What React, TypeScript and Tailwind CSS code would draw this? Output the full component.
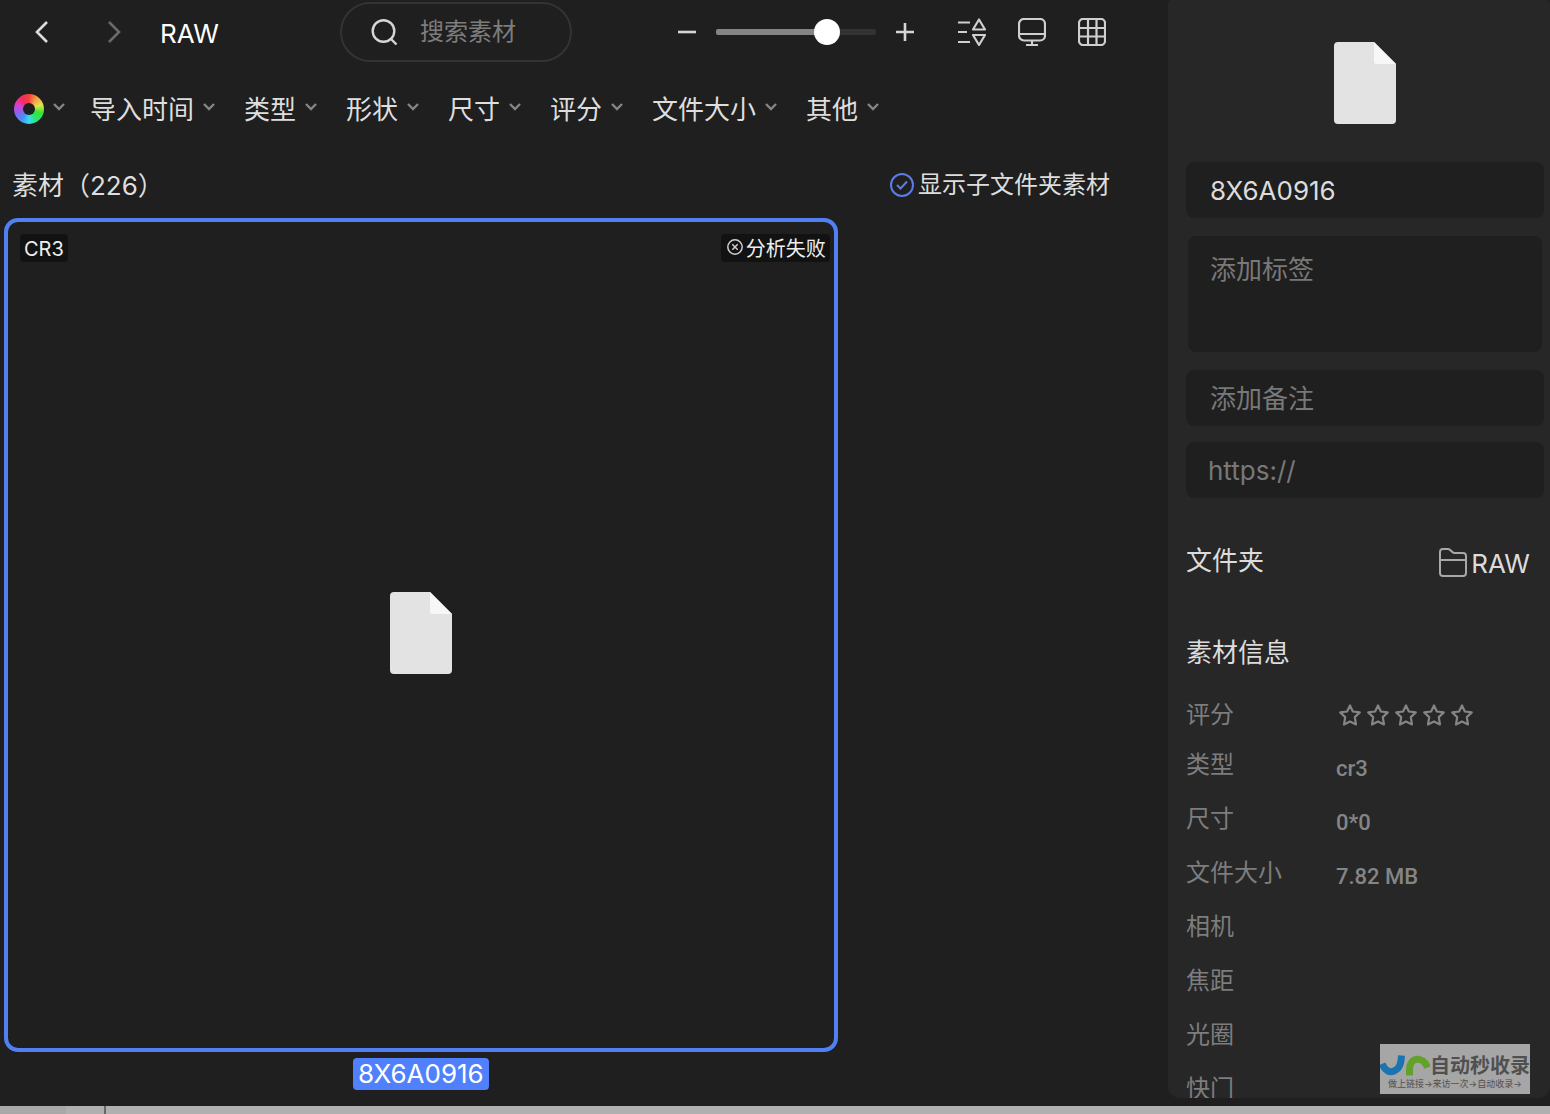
import { useState } from "react";

const filters = ["导入时间", "类型", "形状", "尺寸", "评分", "文件大小", "其他"];

const info = [
  { label: "类型", value: "cr3" },
  { label: "尺寸", value: "0*0" },
  { label: "文件大小", value: "7.82 MB" },
  { label: "相机", value: "" },
  { label: "焦距", value: "" },
  { label: "光圈", value: "" },
  { label: "快门", value: "" },
];

function FileIcon() {
  return (
    <svg width="62" height="82" viewBox="0 0 62 82" aria-hidden="true">
      <path d="M3 0H40L62 22V78a4 4 0 0 1-4 4H4a4 4 0 0 1-4-4V4a4 4 0 0 1 4-4Z" fill="#e3e3e3" />
      <path d="M40 0 62 22H42a2 2 0 0 1-2-2Z" fill="#f7f7f7" />
    </svg>
  );
}

function Caret() {
  return (
    <svg className="mb-1" width="14" height="10" viewBox="0 0 14 10" fill="none" stroke="#858585" strokeWidth="2.4" aria-hidden="true">
      <path d="M2 2l5 5 5-5" />
    </svg>
  );
}

function Toolbar() {
  const [size, setSize] = useState(73);
  // the thumb is 26px wide, so its centre travels from 13px to 147px
  const fill = 13 + (size / 100) * 134;

  return (
    <header className="flex h-16 shrink-0 items-center pr-[62px]">
      <div className="flex w-[340px] shrink-0 items-center pl-6">
        <button aria-label="后退" className="flex h-9 w-9 items-center justify-center">
          <svg width="14" height="24" viewBox="0 0 14 24" fill="none" stroke="#dcdcdc" strokeWidth="2.6">
            <path d="M12 2 2 12l10 10" />
          </svg>
        </button>
        <button aria-label="前进" className="ml-9 flex h-9 w-9 items-center justify-center">
          <svg width="14" height="24" viewBox="0 0 14 24" fill="none" stroke="#6a6a6a" strokeWidth="2.6">
            <path d="m2 2 10 10L2 22" />
          </svg>
        </button>
        <h1 className="ml-7 pt-0.5 text-[26px] text-white">RAW</h1>
      </div>

      <label className="flex h-[60px] w-[232px] items-center gap-[22px] rounded-full border-2 border-[#333] pl-7">
        <svg className="shrink-0" width="28" height="28" viewBox="0 0 28 28" fill="none" stroke="#d6d6d6" strokeWidth="2.4" aria-hidden="true">
          <circle cx="13.5" cy="13" r="10.8" />
          <path d="m21 21 5.500 5.500" />
        </svg>
        <input
          type="text"
          aria-label="搜索素材"
          placeholder="搜索素材"
          className="min-w-0 flex-1 bg-transparent text-2xl text-[#ddd] outline-none placeholder:text-[#7d7d7d]"
        />
      </label>

      <div className="ml-auto flex items-center">
        <button aria-label="缩小" className="flex h-6 w-6 items-center justify-center">
          <svg width="18" height="18" viewBox="0 0 18 18" stroke="#d6d6d6" strokeWidth="2.6">
            <path d="M0 9h18" />
          </svg>
        </button>
        <input
          type="range"
          aria-label="缩略图大小"
          value={size}
          onChange={(e) => setSize(Number(e.target.value))}
          className="mx-[17px] h-1.5 w-40 appearance-none rounded-xs [&::-webkit-slider-thumb]:h-[26px] [&::-webkit-slider-thumb]:w-[26px] [&::-webkit-slider-thumb]:appearance-none [&::-webkit-slider-thumb]:rounded-full [&::-webkit-slider-thumb]:bg-white"
          style={{ background: `linear-gradient(to right, #858585 ${fill}px, #333 ${fill}px)` }}
        />
        <button aria-label="放大" className="flex h-6 w-6 items-center justify-center">
          <svg width="18" height="18" viewBox="0 0 18 18" stroke="#d6d6d6" strokeWidth="2.6">
            <path d="M0 9h18M9 0v18" />
          </svg>
        </button>
        <div className="ml-[41px] flex items-center gap-8 text-[#cfcfcf]">
          <button aria-label="排序">
            <svg width="28" height="28" viewBox="0 0 28 28" fill="none" stroke="currentColor" strokeWidth="2.2" strokeLinejoin="round">
              <path d="M0 4.500h12M0 14h9M0 24h12" />
              <path d="M21 1.500 27 11.500H15ZM21 27 27 17H15Z" />
            </svg>
          </button>
          <button aria-label="全屏预览">
            <svg width="28" height="28" viewBox="0 0 28 28" fill="none" stroke="currentColor" strokeWidth="2.2">
              <rect x="1" y="1" width="26" height="21.500" rx="5" />
              <path d="M1 16h26M14 22v5M8 27h12" />
            </svg>
          </button>
          <button aria-label="网格视图">
            <svg width="28" height="28" viewBox="0 0 28 28" fill="none" stroke="currentColor" strokeWidth="2.2">
              <rect x="1" y="1" width="26" height="26" rx="4" />
              <path d="M10 1v26M18.500 1v26M1 10h26M1 18.500h26" />
            </svg>
          </button>
        </div>
      </div>
    </header>
  );
}

function FilterBar() {
  return (
    <nav className="flex h-[88px] shrink-0 items-center gap-6 pt-0.5 pl-3.5">
      <button aria-label="颜色" className="flex items-center gap-2">
        <span className="flex h-[30px] w-[30px] items-center justify-center rounded-full bg-[conic-gradient(#f5413b,#f6a04a,#e2e54b,#35e531,#2be56c,#35dcf0,#4a8df5,#8a62ee,#d93fd0,#f52b62,#f5413b)]">
          <span className="h-3 w-3 rounded-full bg-[#1f1f1f]" />
        </span>
        <Caret />
      </button>
      <div className="flex items-center gap-7">
        {filters.map((name) => (
          <button key={name} className="flex items-center gap-2 text-[26px] whitespace-nowrap text-[#dedede]">
            {name}
            <Caret />
          </button>
        ))}
      </div>
    </nav>
  );
}

function AssetCard() {
  return (
    <figure className="flex w-[72%] flex-col items-center">
      <div className="relative flex aspect-square w-full items-center justify-center rounded-[14px] border-4 border-[#5080f2] pb-1">
        <span className="absolute top-3 left-3 flex h-7 items-center rounded bg-[#121212] px-1 pt-0.5 text-xl text-[#eee]">CR3</span>
        <span className="absolute top-3 right-1 flex h-7 items-center gap-[3px] rounded bg-[#121212] px-1 pt-0.5 text-xl text-[#eee]">
          <svg className="mb-1 ml-0.5" width="16" height="16" viewBox="0 0 16 16" fill="none" stroke="#d0d0d0" strokeWidth="1.500" aria-hidden="true">
            <circle cx="8" cy="8" r="7.200" />
            <path d="m5.300 5.300 5.400 5.400M10.700 5.300l-5.400 5.400" />
          </svg>
          分析失败
        </span>
        <FileIcon />
      </div>
      <figcaption className="mt-1.5 flex h-8 items-center rounded bg-[#5080fb] px-[5px] text-[26px] text-white">8X6A0916</figcaption>
    </figure>
  );
}

function Rating() {
  return (
    <div className="flex">
      {[1, 2, 3, 4, 5].map((n) => (
        <button key={n} aria-label={`${n} 星`} className="flex w-7 justify-center">
          <svg width="24" height="24" viewBox="0 0 24 24" fill="none" stroke="#858585" strokeWidth="2.2" strokeLinejoin="round">
            <path d="m12 2.500 2.900 6 6.900.900-5 4.700 1.200 7.400-6-3-6 3 1.200-7.400-5-4.700 6.900-.900Z" />
          </svg>
        </button>
      ))}
    </div>
  );
}

function Inspector() {
  return (
    <aside className="mb-2 w-[382px] shrink-0 overflow-hidden rounded-t-sm rounded-b-xl bg-[#272727] pt-[42px] pr-1.5 pl-[18px]">
      <div className="flex h-[82px] justify-center">
        <FileIcon />
      </div>

      <div className="mt-[38px] flex flex-col text-[26px] text-[#dcdcdc]">
        <input aria-label="名称" defaultValue="8X6A0916" className="h-14 rounded-lg bg-[#1f1f1f] px-6 outline-none" />
        <textarea
          aria-label="标签"
          placeholder="添加标签"
          className="mx-0.5 my-[18px] h-[116px] resize-none rounded-lg bg-[#1f1f1f] px-[22px] py-3.5 outline-none placeholder:text-[#787878]"
        />
        <input aria-label="备注" placeholder="添加备注" className="h-14 rounded-lg bg-[#1f1f1f] px-6 outline-none placeholder:text-[#787878]" />
        <input aria-label="链接" placeholder="https://" className="mt-4 h-14 rounded-lg bg-[#1f1f1f] px-[22px] outline-none placeholder:text-[#787878]" />
      </div>

      <div className="mt-[46px] flex h-8 items-center justify-between pr-3.5 text-[26px] text-[#dcdcdc]">
        <h2>文件夹</h2>
        <a href="#raw" className="flex items-center gap-1 pt-1.5">
          <svg width="28" height="30" viewBox="0 0 28 30" fill="none" stroke="#a8a8a8" strokeWidth="2" aria-hidden="true">
            <path d="M1 12V4a3 3 0 0 1 3-3h5c3 0 3.500 4 6.500 4H24a3 3 0 0 1 3 3v17a3 3 0 0 1-3 3H4a3 3 0 0 1-3-3V12h26" />
          </svg>
          RAW
        </a>
      </div>

      <h2 className="mt-[60px] flex h-8 items-center text-[26px] text-[#dcdcdc]">素材信息</h2>

      <dl className="mt-6 text-2xl text-[#7d7d7d]">
        <div className="flex h-[46px] items-center">
          <dt className="w-[150px]">评分</dt>
          <dd>
            <Rating />
          </dd>
        </div>
        {info.map(({ label, value }) => (
          <div key={label} className="flex h-[54px] items-center">
            <dt className="w-[150px]">{label}</dt>
            <dd className="pt-2 font-[Roboto] text-[22px] font-medium text-[#858585]">{value}</dd>
          </div>
        ))}
      </dl>
    </aside>
  );
}

function SiteBadge() {
  return (
    <div className="absolute right-5 bottom-5 flex h-[50px] w-[150px] flex-col overflow-hidden bg-[#a6a6a6] pt-2.5 text-[#505050]">
      <div className="flex h-6 items-center">
        <svg className="shrink-0" width="50" height="24" viewBox="0 0 50 24" fill="none" strokeWidth="7" aria-hidden="true">
          <path d="M2 10c3 7 8 9 12 7 5-2 7-6 7.500-15.500" stroke="#1b74b0" />
          <path d="M29.500 21.500V16c0-14 14-14 18-2.500" stroke="#62a12a" />
        </svg>
        <span className="text-xl leading-6 font-bold whitespace-nowrap">自动秒收录</span>
      </div>
      <span className="pl-2 text-[9px] leading-3 whitespace-nowrap">做上链接→来访一次→自动收录→</span>
    </div>
  );
}

export default function App() {
  return (
    <div className="relative flex h-screen flex-col overflow-hidden bg-[#1f1f1f] font-[Inter,'Noto_Sans_CJK_SC',sans-serif]">
      <div className="flex min-h-0 flex-1">
        <main className="flex min-w-0 flex-1 flex-col">
          <Toolbar />
          <FilterBar />
          <div className="flex h-[66px] shrink-0 items-center justify-between pr-[58px] pl-3 text-[#dedede]">
            <h2 className="text-[26px]">素材（226）</h2>
            <label className="flex items-center gap-1 text-2xl">
              <span className="grid h-6 w-6">
                <input type="checkbox" defaultChecked className="peer col-start-1 row-start-1 h-6 w-6 appearance-none rounded-full border-2 border-[#5b7bea]" />
                <svg className="pointer-events-none invisible col-start-1 row-start-1 peer-checked:visible" width="24" height="24" viewBox="0 0 24 24" fill="none" stroke="#5b7bea" strokeWidth="2">
                  <path d="m7 12 3.500 3.500L17 8.500" />
                </svg>
              </span>
              显示子文件夹素材
            </label>
          </div>
          <div className="min-h-0 flex-1 pr-1.5 pl-1">
            <AssetCard />
          </div>
        </main>
        <Inspector />
      </div>
      <footer className="flex h-2 shrink-0 bg-[#b0b0b0]">
        <div className="w-[66px] bg-[#a8a8a8]" />
        <div className="w-10 border-r-2 border-[#686868]" />
      </footer>
      <SiteBadge />
    </div>
  );
}
